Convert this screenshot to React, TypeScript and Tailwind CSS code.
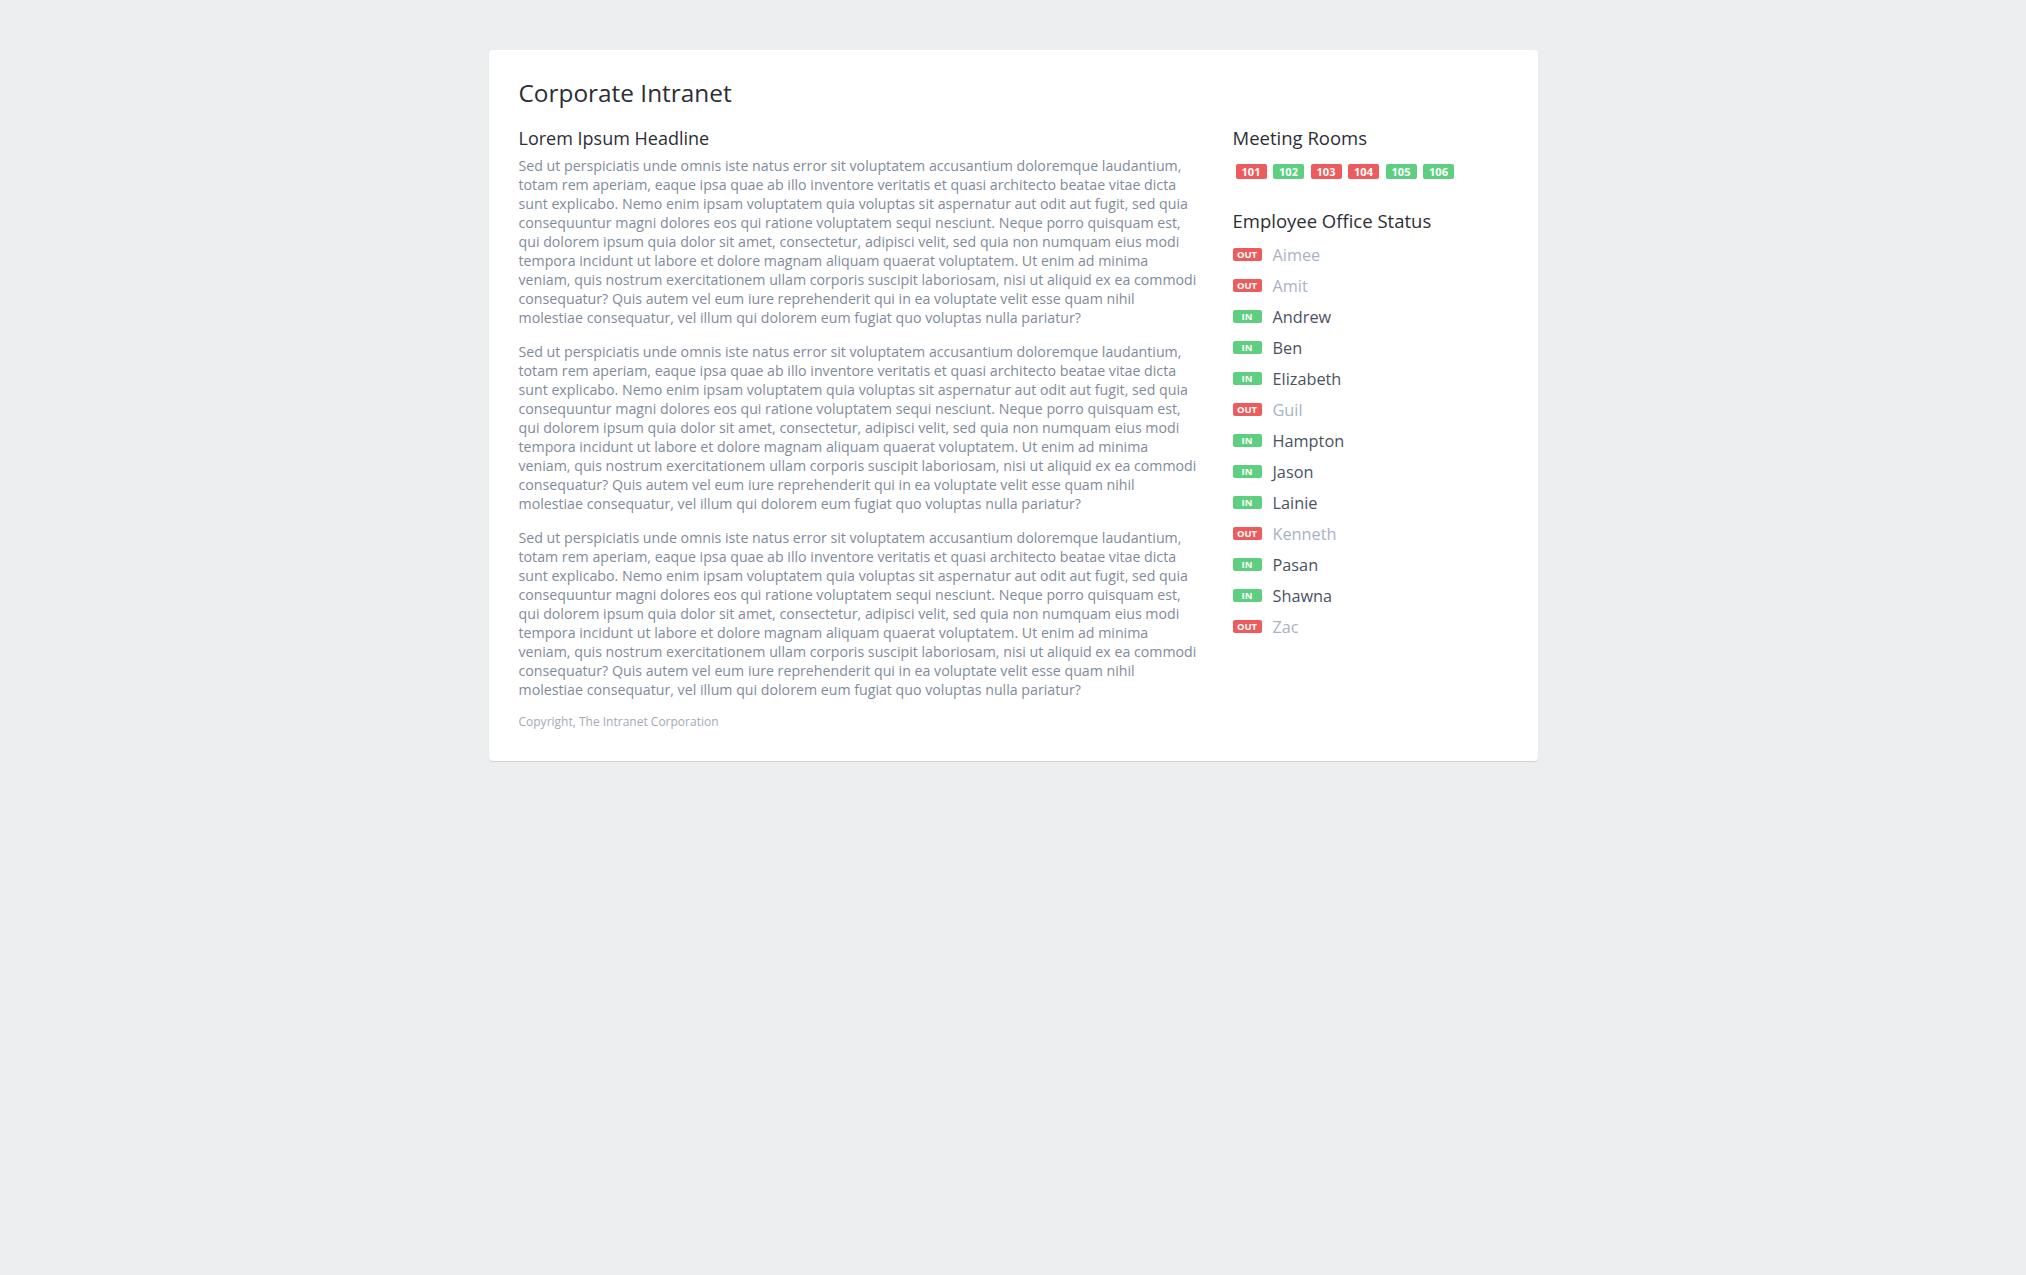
import React from "react";

const para = [
  "Sed ut perspiciatis unde omnis iste natus error sit voluptatem accusantium doloremque laudantium,",
  "totam rem aperiam, eaque ipsa quae ab illo inventore veritatis et quasi architecto beatae vitae dicta",
  "sunt explicabo. Nemo enim ipsam voluptatem quia voluptas sit aspernatur aut odit aut fugit, sed quia",
  "consequuntur magni dolores eos qui ratione voluptatem sequi nesciunt. Neque porro quisquam est,",
  "qui dolorem ipsum quia dolor sit amet, consectetur, adipisci velit, sed quia non numquam eius modi",
  "tempora incidunt ut labore et dolore magnam aliquam quaerat voluptatem. Ut enim ad minima",
  "veniam, quis nostrum exercitationem ullam corporis suscipit laboriosam, nisi ut aliquid ex ea commodi",
  "consequatur? Quis autem vel eum iure reprehenderit qui in ea voluptate velit esse quam nihil",
  "molestiae consequatur, vel illum qui dolorem eum fugiat quo voluptas nulla pariatur?",
];

const rooms: { n: string; free: boolean }[] = [
  { n: "101", free: false },
  { n: "102", free: true },
  { n: "103", free: false },
  { n: "104", free: false },
  { n: "105", free: true },
  { n: "106", free: true },
];

const employees: { name: string; inOffice: boolean }[] = [
  { name: "Aimee", inOffice: false },
  { name: "Amit", inOffice: false },
  { name: "Andrew", inOffice: true },
  { name: "Ben", inOffice: true },
  { name: "Elizabeth", inOffice: true },
  { name: "Guil", inOffice: false },
  { name: "Hampton", inOffice: true },
  { name: "Jason", inOffice: true },
  { name: "Lainie", inOffice: true },
  { name: "Kenneth", inOffice: false },
  { name: "Pasan", inOffice: true },
  { name: "Shawna", inOffice: true },
  { name: "Zac", inOffice: false },
];

function Paragraph() {
  return (
    <p className="text-[14.2px] leading-[19px] text-[#7f8b9a] mb-[15px] whitespace-nowrap">
      {para.map((l, i) => (
        <span key={i} className="block">
          {l}
        </span>
      ))}
    </p>
  );
}

export default function App() {
  return (
    <div className="min-h-[1275px] bg-[#edeef0] pt-[50px] font-['Open_Sans',sans-serif]">
      <div className="mx-auto w-[1049px] bg-white rounded-[4px] shadow-[0_1px_1px_rgba(0,0,0,0.12)] px-[30px] pt-[28px] pb-[31px]">
        <h1 className="text-[24.4px] leading-[30px] text-[#2c2f36] mb-[18px]">Corporate Intranet</h1>
        <div className="flex gap-[34px]">
          <div className="w-[680px]">
            <h2 className="text-[18px] leading-[24px] text-[#2c2f36] mb-[6px]">Lorem Ipsum Headline</h2>
            <Paragraph />
            <Paragraph />
            <Paragraph />
            <p className="text-[12px] leading-[16px] text-[#a3abb5] mt-[5px]">
              Copyright, The Intranet Corporation
            </p>
          </div>
          <div className="flex-1">
            <h2 className="text-[18.5px] leading-[24px] text-[#2c2f36] mb-[14px]">Meeting Rooms</h2>
            <div className="flex gap-[6.5px] pl-[3px]">
              {rooms.map((r) => (
                <span
                  key={r.n}
                  className={
                    "w-[31px] h-[15px] rounded-[2px] flex items-center justify-center text-[11px] font-bold text-white leading-none " +
                    (r.free ? "bg-[#5ecf80]" : "bg-[#ec5c5c]")
                  }
                >
                  {r.n}
                </span>
              ))}
            </div>
            <h2 className="text-[18.5px] leading-[24px] text-[#2c2f36] mt-[30px] mb-[6px]">Employee Office Status</h2>
            <ul>
              {employees.map((e) => (
                <li key={e.name} className="flex items-center h-[31px]">
                  <span
                    className={
                      "w-[29px] h-[13px] rounded-[2px] flex items-center justify-center text-[9.5px] font-bold text-white leading-none " +
                      (e.inOffice ? "bg-[#5ecf80]" : "bg-[#ec5c5c]")
                    }
                  >
                    {e.inOffice ? "IN" : "OUT"}
                  </span>
                  <span
                    className={
                      "ml-[11px] text-[16.3px] leading-[20px] " +
                      (e.inOffice ? "text-[#4a5261]" : "text-[#a7b3c3]")
                    }
                  >
                    {e.name}
                  </span>
                </li>
              ))}
            </ul>
          </div>
        </div>
      </div>
    </div>
  );
}
